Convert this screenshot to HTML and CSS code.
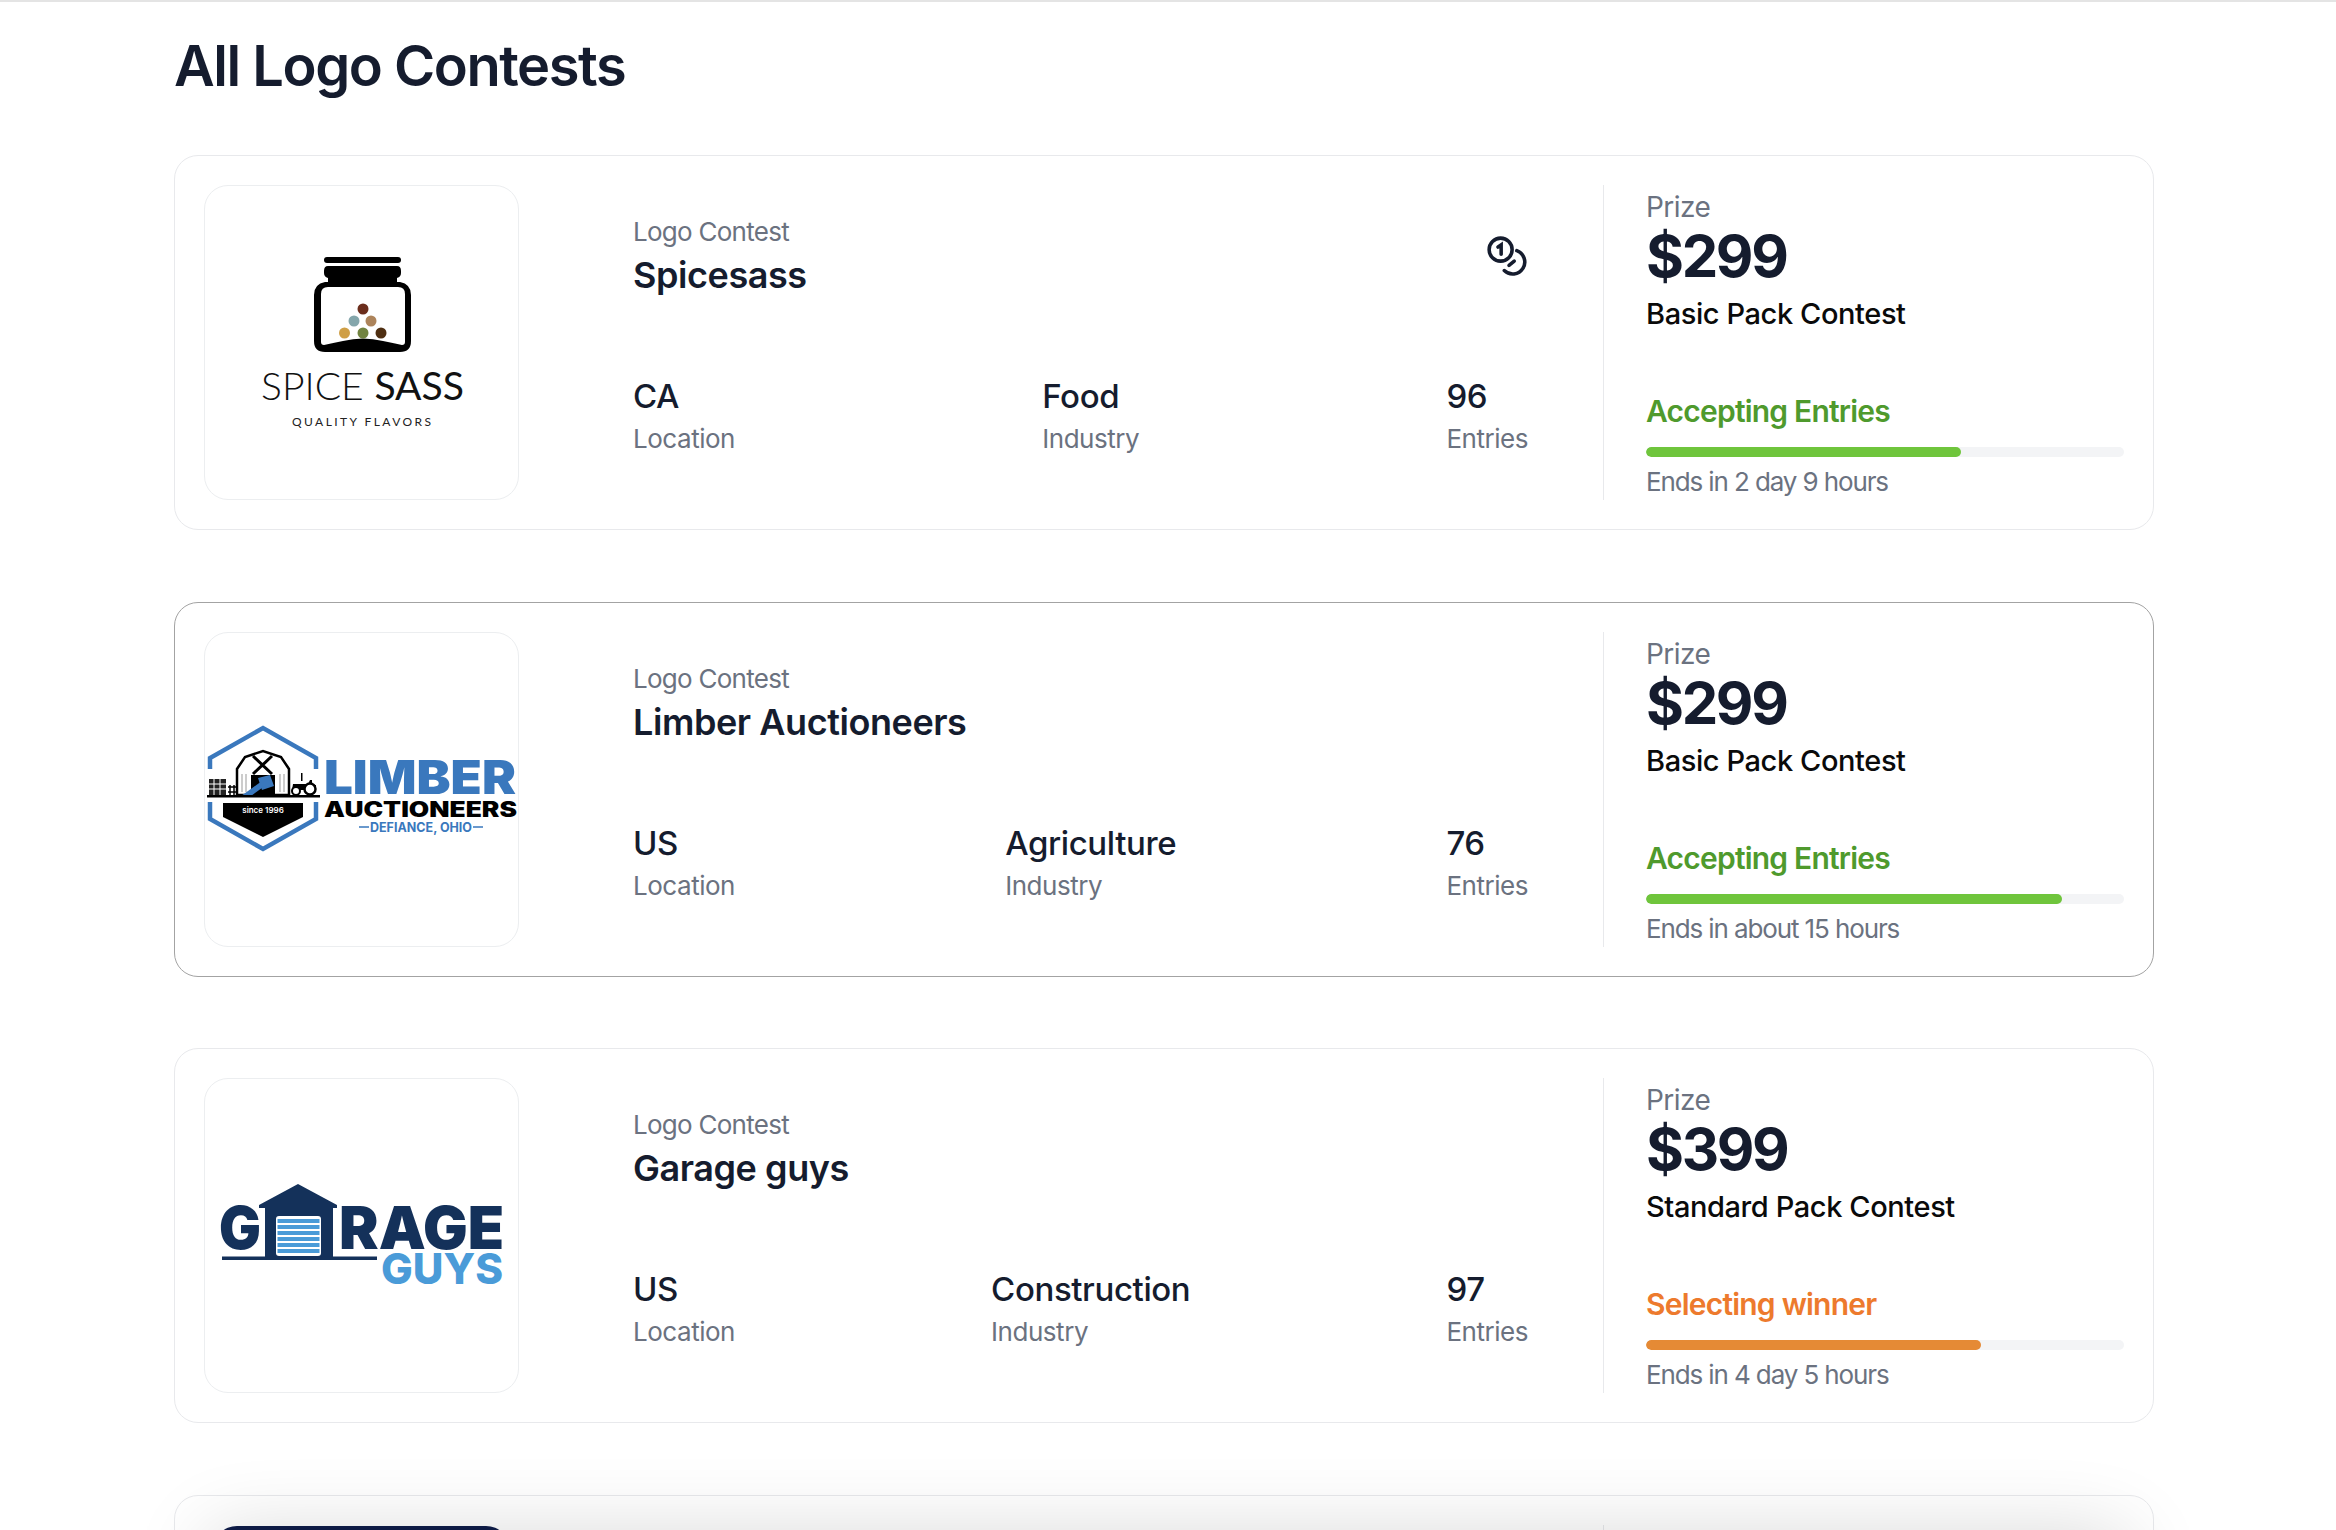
FILE: index.html
```html
<!DOCTYPE html>
<html lang="en">
<head>
<meta charset="utf-8">
<title>All Logo Contests</title>
<link rel="stylesheet" href="styles.css">
</head>
<body>
<main class="page">
  <h1 class="page-title">All Logo Contests</h1>

  <article class="card">
    <div class="thumb">
      <svg class="logo logo-spice" viewBox="0 0 315 315">
        <rect x="121" y="72" width="77" height="6" rx="3" fill="#000"/>
        <path d="M125 81H194Q198 81 198 86V88Q198 92 194 93V97H197Q208 99 208 110V156Q208 167 197 167H122Q111 167 111 156V110Q111 99 122 97H125V93Q121 92 121 88V86Q121 81 125 81Z" fill="#000"/>
        <path d="M125 102H195Q202 102 202 109V157Q202 160 199 160Q190 158 180 156Q160 151 140 156Q130 158 121 160Q118 160 118 157V109Q118 102 125 102Z" fill="#fff"/>
        <circle cx="160" cy="124" r="5.5" fill="#6b2d1c"/>
        <circle cx="151" cy="136" r="5.5" fill="#84a6ab"/>
        <circle cx="168" cy="136" r="5.5" fill="#ad845b"/>
        <circle cx="141.500" cy="148" r="5.500" fill="#cf9f46"/>
        <circle cx="160" cy="148" r="5.500" fill="#718340"/>
        <circle cx="178" cy="148" r="5.500" fill="#4f2f12"/>
        <text x="58" y="215" class="spice-name" textLength="203" lengthAdjust="spacingAndGlyphs">SPICE <tspan class="spice-bold">SASS</tspan></text>
        <text x="89" y="241" class="spice-sub" textLength="139">QUALITY FLAVORS</text>
      </svg>
    </div>
    <div class="details">
      <div class="head-row">
        <div>
          <p class="eyebrow">Logo Contest</p>
          <h2 class="contest-name">Spicesass</h2>
        </div>
        <svg class="coins" viewBox="0 0 44 44" fill="none" stroke="#151c2e" stroke-width="3.400" stroke-linecap="round">
          <circle cx="14" cy="14" r="11"/>
          <path d="M11.500 11.500L14.500 9.500V18.500"/>
          <path d="M29.500 15A11.500 11.500 0 1 1 17.500 34"/>
          <path d="M27 25L22 29"/>
        </svg>
      </div>
      <div class="meta-row">
        <div class="meta"><div class="meta-value">CA</div><div class="meta-label">Location</div></div>
        <div class="meta"><div class="meta-value">Food</div><div class="meta-label">Industry</div></div>
        <div class="meta"><div class="meta-value">96</div><div class="meta-label">Entries</div></div>
      </div>
    </div>
    <aside class="prize">
      <p class="prize-label">Prize</p>
      <p class="prize-amount">$299</p>
      <p class="prize-pack">Basic Pack Contest</p>
      <p class="status status-green">Accepting Entries</p>
      <div class="track"><div class="fill fill-green" style="width:66%"></div></div>
      <p class="ends">Ends in 2 day 9 hours</p>
    </aside>
  </article>

  <article class="card card-active">
    <div class="thumb">
      <svg class="logo" viewBox="0 0 315 315">
        <path d="M6 137V126L59 96L112 126V137M112 170V187L59 217L6 187V170" fill="none" stroke="#3a78bd" stroke-width="4.500"/>
        <path d="M33 163V137L41 125L59 119L77 125L85 137V163Z" fill="#fff" stroke="#000" stroke-width="2.500"/>
        <path d="M49 124L68 142M68 124L49 142" stroke="#000" stroke-width="3"/>
        <rect x="47" y="143" width="24" height="20" fill="#000"/>
        <path d="M38 142V160M42 142V160M76 142V160M80 142V160" stroke="#999" stroke-width="1"/>
        <path d="M37 164L58 149L62 153L47 164Z" fill="#3a78bd"/>
        <path d="M54 146L66 143L70 154L58 158Z" fill="#3a78bd"/>
        <rect x="5" y="147" width="17" height="16" fill="#222"/>
        <path d="M5 152H22M5 157H22M10 147V163M16 147V163" stroke="#fff" stroke-width="1"/>
        <path d="M24 155H32M24 160H32M26 153V163M30 153V163" stroke="#000" stroke-width="1.500"/>
        <path d="M89 152H104L106 148H108V153H112V158H88Z" fill="#000"/>
        <rect x="97" y="141" width="1.500" height="8" fill="#000"/>
        <circle cx="92" cy="159" r="4" fill="#fff" stroke="#000" stroke-width="2"/>
        <circle cx="106" cy="157" r="5.500" fill="#fff" stroke="#000" stroke-width="2.500"/>
        <rect x="3" y="163" width="113" height="2.500" fill="#000"/>
        <path d="M19 171H99V185L59 205L19 185Z" fill="#000"/>
        <text x="59" y="181" class="limber-since" text-anchor="middle">since 1996</text>
        <text x="120" y="162" class="limber-name" textLength="192" lengthAdjust="spacingAndGlyphs">LIMBER</text>
        <text x="120" y="184.500" class="limber-sub" textLength="193" lengthAdjust="spacingAndGlyphs">AUCTIONEERS</text>
        <text x="166" y="200" class="limber-place" textLength="102" lengthAdjust="spacingAndGlyphs">DEFIANCE, OHIO</text>
        <path d="M155 195H165M269 195H279" stroke="#3a78bd" stroke-width="1.500"/>
      </svg>
    </div>
    <div class="details">
      <div class="head-row">
        <div>
          <p class="eyebrow">Logo Contest</p>
          <h2 class="contest-name">Limber Auctioneers</h2>
        </div>
      </div>
      <div class="meta-row">
        <div class="meta"><div class="meta-value">US</div><div class="meta-label">Location</div></div>
        <div class="meta"><div class="meta-value">Agriculture</div><div class="meta-label">Industry</div></div>
        <div class="meta"><div class="meta-value">76</div><div class="meta-label">Entries</div></div>
      </div>
    </div>
    <aside class="prize">
      <p class="prize-label">Prize</p>
      <p class="prize-amount">$299</p>
      <p class="prize-pack">Basic Pack Contest</p>
      <p class="status status-green">Accepting Entries</p>
      <div class="track"><div class="fill fill-green" style="width:87%"></div></div>
      <p class="ends">Ends in about 15 hours</p>
    </aside>
  </article>

  <article class="card">
    <div class="thumb">
      <svg class="logo" viewBox="0 0 315 315">
        <text x="15" y="171" class="garage-name" textLength="42" lengthAdjust="spacingAndGlyphs">G</text>
        <path d="M94 106L133 127V130H129V179H61V130H55V127Z" fill="#14315a"/>
        <rect x="72" y="138" width="45" height="40" rx="3" fill="#fff"/>
        <path d="M73.500 143H115.500M73.500 149H115.500M73.500 155H115.500M73.500 161H115.500M73.500 167H115.500M73.500 173H115.500" stroke="#4a9bd8" stroke-width="4"/>
        <rect x="18" y="178.500" width="155" height="3.500" fill="#14315a"/>
        <text x="135" y="171" class="garage-name" textLength="165" lengthAdjust="spacingAndGlyphs">RAGE</text>
        <text x="177" y="206" class="garage-sub" textLength="122" lengthAdjust="spacingAndGlyphs">GUYS</text>
      </svg>
    </div>
    <div class="details">
      <div class="head-row">
        <div>
          <p class="eyebrow">Logo Contest</p>
          <h2 class="contest-name">Garage guys</h2>
        </div>
      </div>
      <div class="meta-row">
        <div class="meta"><div class="meta-value">US</div><div class="meta-label">Location</div></div>
        <div class="meta"><div class="meta-value">Construction</div><div class="meta-label">Industry</div></div>
        <div class="meta"><div class="meta-value">97</div><div class="meta-label">Entries</div></div>
      </div>
    </div>
    <aside class="prize">
      <p class="prize-label">Prize</p>
      <p class="prize-amount">$399</p>
      <p class="prize-pack">Standard Pack Contest</p>
      <p class="status status-orange">Selecting winner</p>
      <div class="track"><div class="fill fill-orange" style="width:70%"></div></div>
      <p class="ends">Ends in 4 day 5 hours</p>
    </aside>
  </article>

  <article class="card">
    <div class="thumb thumb-bare"><div class="thumb-navy"></div></div>
    <div class="details"></div>
    <aside class="prize"></aside>
  </article>
</main>
<div class="bottom-fade"></div>
</body>
</html>
```
FILE: styles.css
```css
* { box-sizing: border-box; }
html, body { margin: 0; height: 1530px; overflow: hidden; background: #fff; }
body {
  font-family: Inter, "Noto Sans", sans-serif;
  color: #151c2e;
  border-top: 2px solid #e4e4e4;
  position: relative;
}
p, h1, h2 { margin: 0; }

.page { width: 1980px; margin-left: 174px; }
.page-title {
  font-size: 56px;
  line-height: 70px;
  font-weight: 600;
  letter-spacing: -0.026em;
  padding-top: 29px;
  margin-bottom: 54px;
}

.card {
  display: flex;
  height: 375px;
  padding: 29px;
  margin-bottom: 71.6px;
  border: 1px solid #e8e9ec;
  border-radius: 24px;
  background: #fff;
}
.card-active { border-color: #a3a3a3; }

.thumb {
  flex: 0 0 315px;
  height: 315px;
  border: 1px solid #eceef0;
  border-radius: 24px;
  overflow: hidden;
}
.thumb-bare { border-color: transparent; padding: 0 8px; }
.thumb-navy { height: 40px; background: #0f1d4a; border-radius: 24px 24px 0 0; }
.logo { display: block; width: 315px; height: 315px; margin: -1px; }
.logo-spice { margin-left: -2px; }

.details {
  flex: 0 0 895px;
  margin-left: 114px;
  padding: 29px 0 41px;
  display: flex;
  flex-direction: column;
  justify-content: space-between;
}
.head-row { display: flex; justify-content: space-between; align-items: flex-start; }
.eyebrow {
  font-size: 26px;
  line-height: 36px;
  color: #6b7280;
  letter-spacing: -0.028em;
}
.contest-name {
  font-size: 36px;
  line-height: 50px;
  font-weight: 600;
  letter-spacing: -0.012em;
}
.coins { width: 46px; height: 46px; margin-top: 21px; margin-right: -4px; }

.meta-row { display: flex; justify-content: space-between; }
.meta-value {
  font-size: 33px;
  line-height: 46px;
  font-weight: 500;
  letter-spacing: -0.012em;
}
.meta-label {
  font-size: 26px;
  line-height: 40px;
  color: #6b7280;
  letter-spacing: -0.018em;
}

.prize {
  flex: 0 0 521px;
  margin-left: 75px;
  padding: 4px 0 0 42px;
  border-left: 1px solid #e8e9ec;
}
.prize-label {
  font-size: 28px;
  line-height: 36px;
  color: #6b7280;
  letter-spacing: -0.02em;
}
.prize-amount {
  font-size: 58px;
  line-height: 62px;
  font-weight: 700;
  letter-spacing: -0.04em;
}
.prize-pack {
  margin-top: 7px;
  font-size: 29px;
  line-height: 40px;
  font-weight: 500;
  color: #0a0a0a;
  letter-spacing: -0.014em;
}
.status {
  margin-top: 57px;
  font-size: 30px;
  line-height: 40px;
  font-weight: 600;
  letter-spacing: -0.026em;
}
.status-green { color: #4f9a2d; }
.status-orange { color: #ed7a2d; }
.track {
  margin-top: 16px;
  height: 10px;
  border-radius: 5px;
  background: #f3f4f6;
  overflow: hidden;
}
.fill { height: 100%; border-radius: 5px; }
.fill-green { background: #6fc53c; }
.fill-orange { background: #e58a35; }
.ends {
  margin-top: 7px;
  font-size: 26px;
  line-height: 36px;
  color: #6b7280;
  letter-spacing: -0.043em;
}

.bottom-fade {
  position: absolute;
  left: 240px;
  right: 240px;
  top: 1562px;
  height: 120px;
  box-shadow: 0 0 80px 30px rgba(0, 0, 0, 0.16);
  pointer-events: none;
}

.spice-name { font-family: Lato, sans-serif; font-weight: 300; font-size: 38px; fill: #111; }
.spice-bold { font-weight: 400; }
.spice-sub { font-family: Lato, sans-serif; font-size: 12px; fill: #222; }
.limber-name { font-family: Inter, sans-serif; font-weight: 900; font-size: 47px; fill: #3a78bd; }
.limber-sub { font-family: Inter, sans-serif; font-weight: 900; font-size: 21px; fill: #000; }
.limber-place { font-family: Inter, sans-serif; font-weight: 700; font-size: 13px; fill: #3a78bd; }
.limber-since { font-family: Inter, sans-serif; font-weight: 600; font-size: 8px; fill: #fff; }
.garage-name { font-family: Inter, sans-serif; font-weight: 900; font-size: 59px; fill: #14315a; }
.garage-sub { font-family: Inter, sans-serif; font-weight: 800; font-size: 43px; fill: #4a9bd8; }
```
